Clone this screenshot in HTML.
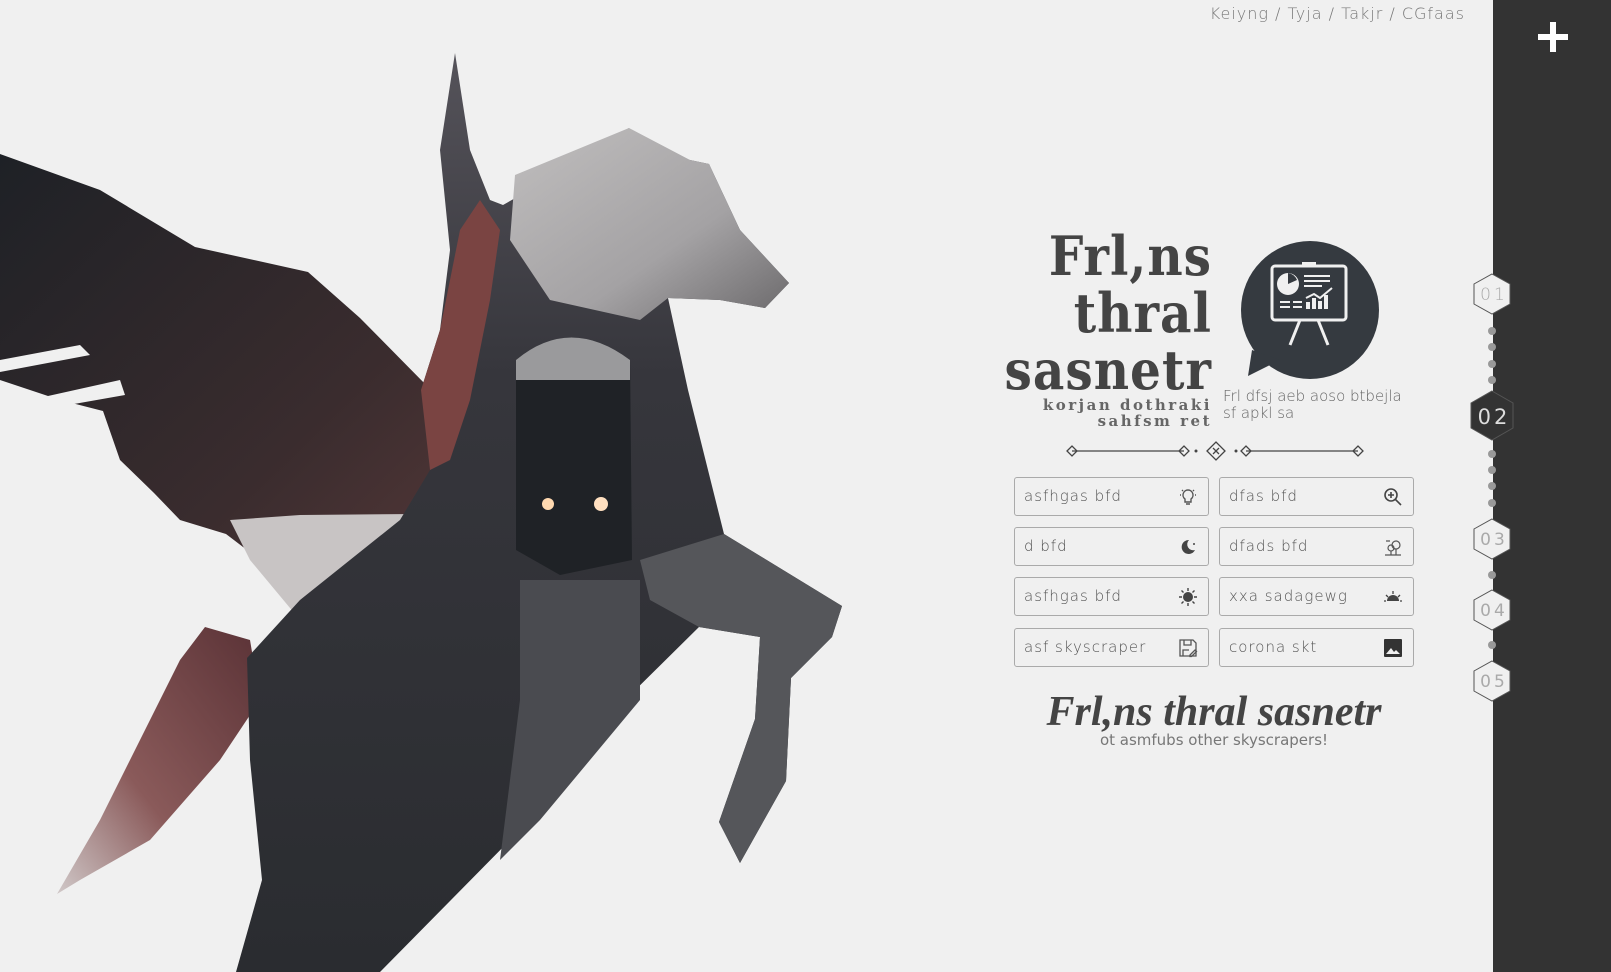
<!DOCTYPE html>
<html><head><meta charset="utf-8"><style>
*{margin:0;padding:0;box-sizing:border-box}
body{width:1611px;height:972px;background:#f0f0f0;position:relative;overflow:hidden;font-family:"DejaVu Sans","Liberation Sans",sans-serif;color:#555}
.side{position:absolute;left:1493px;top:0;width:118px;height:972px;background:#333}
.plus{position:absolute;left:1538px;top:22px;width:30px;height:30px}
.plus:before{content:"";position:absolute;left:0;top:12px;width:30px;height:6px;background:#fff}
.plus:after{content:"";position:absolute;left:12px;top:0;width:6px;height:30px;background:#fff}
.crumb{position:absolute;right:146px;top:4px;font-size:16px;color:#777;letter-spacing:1px;font-weight:300}
.title{position:absolute;right:399px;top:228px;text-align:right;font-family:"DejaVu Serif",serif;font-weight:bold;font-stretch:condensed;font-size:54px;line-height:57px;color:#444;letter-spacing:1px}
.sub{position:absolute;right:399px;top:397px;text-align:right;font-family:"DejaVu Serif",serif;font-weight:bold;font-size:15px;line-height:16px;color:#666;letter-spacing:2.5px}
.desc{position:absolute;left:1223px;top:388px;font-size:15px;line-height:17px;color:#666;font-weight:300}
.btn{position:absolute;width:195px;height:39px;border:1px solid #aaa;border-radius:3px;font-size:15px;color:#555;letter-spacing:1px;padding:9px 9px;font-weight:300}
.btn svg{position:absolute;right:10px;top:9px}
.script{position:absolute;left:1014px;width:400px;text-align:center;top:688px;font-family:"Liberation Serif",serif;font-style:italic;font-weight:bold;font-size:42px;color:#444}
.script2{position:absolute;left:1014px;width:400px;text-align:center;top:731px;font-size:15px;color:#777}
</style></head><body>
<svg style="position:absolute;left:0;top:0" width="900" height="972">
<defs>
<linearGradient id="w" x1="0" y1="0" x2="1" y2="1"><stop offset="0" stop-color="#1e2126"/><stop offset=".6" stop-color="#3a2c2e"/><stop offset="1" stop-color="#5a3a3a"/></linearGradient>
<linearGradient id="b" x1="0" y1="0" x2="0" y2="1"><stop offset="0" stop-color="#55535a"/><stop offset=".35" stop-color="#36363c"/><stop offset="1" stop-color="#2a2c30"/></linearGradient>
<linearGradient id="h" x1="0" y1="0" x2="1" y2="1"><stop offset="0" stop-color="#c0bebe"/><stop offset=".6" stop-color="#a4a2a4"/><stop offset="1" stop-color="#6a686a"/></linearGradient>
<linearGradient id="t" x1="1" y1="0" x2="0" y2="1"><stop offset="0" stop-color="#5a3236"/><stop offset=".6" stop-color="#8a5a5a"/><stop offset="1" stop-color="#d0c8c8"/></linearGradient>
</defs>
<path d="M0 154 L100 190 L195 247 L308 272 L360 318 L431 390 L493 452 L470 500 L416 514 L360 560 L308 627 L260 560 L226 534 L180 520 L154 493 L120 460 L103 411 L60 400 L0 380 Z" fill="url(#w)"/>
<path d="M0 360 L80 345 L90 355 L0 372 Z M30 400 L120 380 L125 395 L40 410 Z" fill="#f0f0f0"/>
<path d="M416 514 L300 515 L230 520 L250 560 L300 620 L330 600 L390 560 Z" fill="#c8c4c4"/>
<path d="M205 627 L250 640 L260 700 L220 760 L150 840 L80 880 L57 894 L100 820 L150 720 L180 660 Z" fill="url(#t)"/>
<path d="M455 53 L470 150 L490 200 L503 205 L565 170 L629 128 L640 150 L690 160 L709 164 L740 230 L789 283 L765 308 L720 300 L668 298 L688 390 L724 534 L842 606 L832 637 L791 678 L786 781 L740 863 L719 822 L755 719 L760 637 L699 627 L616 709 L560 760 L520 830 L380 972 L236 972 L262 880 L250 760 L247 658 L300 600 L400 520 L430 470 L421 390 L440 330 L450 250 L440 150 Z" fill="url(#b)"/>
<path d="M515 175 L629 128 L690 160 L709 164 L740 230 L789 283 L765 308 L720 300 L668 298 L640 320 L550 300 L510 240 Z" fill="url(#h)"/>
<path d="M421 390 L440 330 L460 230 L480 200 L500 230 L490 300 L470 400 L450 460 L430 470 Z" fill="#7a4442"/>
<path d="M640 560 L724 534 L842 606 L832 637 L791 678 L786 781 L740 863 L719 822 L755 719 L760 637 L699 627 L650 600 Z" fill="#55565a"/>
<path d="M520 580 L640 580 L640 700 L590 760 L540 820 L500 860 L520 700 Z" fill="#4a4b50"/>
<path d="M516 360 Q570 315 630 360 L632 560 L560 575 L516 550 Z" fill="#1f2226"/>
<path d="M516 360 Q570 315 630 360 L630 380 L516 380 Z" fill="#9a9a9c"/>
<circle cx="548" cy="504" r="6" fill="#ffd9b0"/><circle cx="601" cy="504" r="7" fill="#ffe0c0"/>
</svg>
<div class="crumb">Keiyng / Tyja / Takjr / CGfaas</div>
<div class="side"></div>
<div class="plus"></div>
<div class="title">Frl,ns<br>thral<br>sasnetr</div>
<div class="sub">korjan dothraki<br>sahfsm ret</div>
<svg style="position:absolute;left:1240px;top:240px" width="140" height="140" viewBox="0 0 140 140">
<circle cx="70" cy="70" r="69" fill="#353a40"/>
<path d="M12 110 L8 136 L40 120 Z" fill="#353a40"/>
<g fill="none" stroke="#f0f0f0" stroke-width="3">
<rect x="32" y="26" width="74" height="54" rx="3"/>
<path d="M60 80 L50 105 M78 80 L88 105"/>
</g>
<rect x="62" y="22" width="14" height="5" fill="#f0f0f0"/>
<circle cx="48" cy="44" r="11" fill="#f0f0f0"/>
<path d="M48 44 L48 33 A11 11 0 0 1 57 40 Z" fill="#353a40"/>
<path d="M64 36h26M64 41h26M64 46h18M40 62h10M40 67h10M53 62h9M53 67h9" stroke="#f0f0f0" stroke-width="2"/>
<path d="M66 58 L74 54 L80 58 L92 48" stroke="#f0f0f0" stroke-width="2" fill="none"/>
<rect x="66" y="62" width="4" height="7" fill="#f0f0f0"/><rect x="72" y="58" width="4" height="11" fill="#f0f0f0"/><rect x="78" y="61" width="4" height="8" fill="#f0f0f0"/><rect x="84" y="55" width="4" height="14" fill="#f0f0f0"/>
</svg>
<div class="desc">Frl dfsj aeb aoso btbejla<br>sf apkl sa</div>
<svg style="position:absolute;left:1066px;top:440px" width="300" height="22">
<g stroke="#444" fill="none" stroke-width="1.3">
<line x1="6" y1="11" x2="118" y2="11"/><line x1="180" y1="11" x2="292" y2="11"/>
<path d="M1 11l5-5 5 5-5 5z M113 11l5-5 5 5-5 5z M175 11l5-5 5 5-5 5z M287 11l5-5 5 5-5 5z M141 11l9-9 9 9-9 9z"/>
<path d="M147 8l6 6M153 8l-6 6"/>
</g>
<circle cx="130" cy="11" r="1.5" fill="#444"/><circle cx="170" cy="11" r="1.5" fill="#444"/>
</svg>
<div class="btn" style="left:1014px;top:477px">asfhgas bfd<svg width="20" height="20" viewBox="0 0 20 20" fill="none" stroke="#555" stroke-width="1.4"><path d="M10 3a5 5 0 0 0-3 9v3h6v-3a5 5 0 0 0-3-9zM8 17h4"/><path d="M2 8h1M17 8h1M4 3l1 1M16 3l-1 1" /></svg></div>
<div class="btn" style="left:1219px;top:477px">dfas bfd<svg width="20" height="20" viewBox="0 0 20 20" fill="none" stroke="#444" stroke-width="1.6"><circle cx="8" cy="8" r="6"/><path d="M12.5 12.5L18 18M8 5v6M5 8h6"/></svg></div>
<div class="btn" style="left:1014px;top:527px">d bfd<svg width="20" height="20" viewBox="0 0 20 20"><path d="M11 3a7 7 0 1 0 6 10 6 6 0 0 1-6-10z" fill="#444"/><circle cx="16" cy="7" r="1" fill="#444"/></svg></div>
<div class="btn" style="left:1219px;top:527px">dfads bfd<svg width="20" height="20" viewBox="0 0 20 20" fill="none" stroke="#555" stroke-width="1.2"><circle cx="13" cy="8" r="4"/><circle cx="8" cy="11" r="3"/><path d="M8 14v4M13 12v6M2 18h16M3 4h4"/></svg></div>
<div class="btn" style="left:1014px;top:577px">asfhgas bfd<svg width="20" height="20" viewBox="0 0 20 20"><circle cx="10" cy="10" r="5" fill="#444"/><path d="M10 1v3M10 16v3M1 10h3M16 10h3M3.5 3.5l2 2M14.5 14.5l2 2M3.5 16.5l2-2M14.5 5.5l2-2" stroke="#444" stroke-width="1.4"/></svg></div>
<div class="btn" style="left:1219px;top:577px">xxa sadagewg<svg width="20" height="20" viewBox="0 0 20 20"><path d="M4 14a6 6 0 0 1 12 0z" fill="#444"/><path d="M10 4v3M3 8l2 2M17 8l-2 2M1 14h2M17 14h2" stroke="#444" stroke-width="1.3"/></svg></div>
<div class="btn" style="left:1014px;top:628px">asf skyscraper<svg width="20" height="20" viewBox="0 0 20 20" fill="none" stroke="#555" stroke-width="1.3"><path d="M2 2h13l3 3v13H2z M6 2v5h7V2 M5 18v-6h6"/><path d="M12 17l5-5 1.5 1.5-5 5h-1.5z"/></svg></div>
<div class="btn" style="left:1219px;top:628px">corona skt<svg width="20" height="20" viewBox="0 0 20 20"><rect x="1" y="1" width="18" height="18" rx="1" fill="#333"/><path d="M3 16l5-6 3 4 2-2 4 4z" fill="#f0f0f0"/></svg></div>
<div class="script">Frl,ns thral sasnetr</div>
<div class="script2">ot asmfubs other skyscrapers!</div>
<svg style="position:absolute;left:1460px;top:0" width="60" height="972">
<g fill="#999">
<circle cx="32" cy="331" r="4"/><circle cx="32" cy="347" r="4"/><circle cx="32" cy="364" r="4"/><circle cx="32" cy="380" r="4"/>
<circle cx="32" cy="454" r="4"/><circle cx="32" cy="470" r="4"/><circle cx="32" cy="486" r="4"/><circle cx="32" cy="503" r="4"/>
<circle cx="32" cy="575" r="4"/><circle cx="32" cy="645" r="4"/>
</g>
<g font-family="DejaVu Sans,sans-serif" font-size="17" text-anchor="middle" letter-spacing="3">
<path d="M32 274l18 10v20l-18 10-18-10v-20z" fill="#f0f0f0" stroke="#555"/><text x="34" y="300" fill="#aaa" font-weight="300">01</text>
<path d="M32 391l21 12v25l-21 12-21-12v-25z" fill="#333" stroke="#555"/><text x="34" y="424" fill="#ddd" font-size="21">02</text>
<path d="M32 519l18 10v20l-18 10-18-10v-20z" fill="#f0f0f0" stroke="#555"/><text x="34" y="545" fill="#aaa">03</text>
<path d="M32 590l18 10v20l-18 10-18-10v-20z" fill="#f0f0f0" stroke="#555"/><text x="34" y="616" fill="#aaa">04</text>
<path d="M32 661l18 10v20l-18 10-18-10v-20z" fill="#f0f0f0" stroke="#555"/><text x="34" y="687" fill="#aaa">05</text>
</g>
</svg>
</body></html>
